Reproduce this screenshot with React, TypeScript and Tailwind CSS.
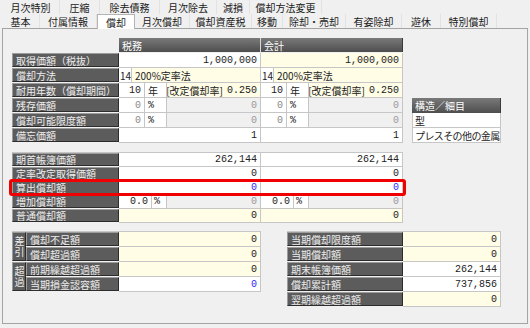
import React from "react";

const JP = "font-['Noto_Sans_CJK_JP','Noto_Sans',sans-serif]";
const MONO = "font-['Liberation_Mono','Noto_Sans_CJK_JP',monospace]";

function Label({ children, w = "w-[107px]", h = "h-[14px]" }: { children: React.ReactNode; w?: string; h?: string }) {
  return (
    <div
      className={`${w} ${h} shrink-0 bg-[#5c5c5c] border border-t-[#9c9c9c] border-l-[#9c9c9c] border-r-[#2c2c2c] border-b-[#2c2c2c] text-[#ededed] text-[10px] leading-[11px] pl-[3px] flex items-center whitespace-nowrap overflow-hidden`}
    >
      {children}
    </div>
  );
}

type CellProps = {
  w: string;
  bg?: string;
  right?: boolean;
  color?: string;
  mono?: boolean;
  pad?: string;
  children?: React.ReactNode;
};

function Cell({ w, bg = "bg-white", right, color = "text-[#222]", mono, pad, children }: CellProps) {
  return (
    <div
      className={`${w} h-full shrink-0 ${bg} ${color} border-r border-b border-[#c6c6c6] text-[10px] leading-[11px] flex items-center whitespace-nowrap overflow-hidden ${right ? "justify-end" : ""} ${pad ?? (right ? "pr-[3px]" : "pl-[3px]")} ${mono ? MONO : ""}`}
    >
      {children}
    </div>
  );
}

const YEL = "bg-[#fffde5]";
const GRY = "bg-[#f0f0f0]";

function Tab({ w, label, selected }: { w: string; label: string; selected?: boolean }) {
  return (
    <div
      className={`${w} shrink-0 flex items-center justify-center text-[10px] leading-[11px] text-[#1a1a1a] whitespace-nowrap ${
        selected ? "bg-white border-x border-t border-[#b4b4b4] h-[15px] relative z-10 -mb-px" : "h-[14px] border-r border-[#e2e2e2]"
      }`}
    >
      {label}
    </div>
  );
}

function Rate() {
  return (
    <span className="flex items-center">
      <span>[改定償却率]</span>
      <span className={`${MONO} ml-[4px]`}>0.250</span>
    </span>
  );
}

function VLabel({ text }: { text: string }) {
  return (
    <div className="h-[30px]">
      <div className="h-[29px] bg-[#5c5c5c] border border-t-[#9c9c9c] border-l-[#9c9c9c] border-r-[#2c2c2c] border-b-[#2c2c2c] text-[#ededed] text-[10px] leading-[12px] flex items-center justify-center">
        <span className="[writing-mode:vertical-rl] tracking-[1px]">{text}</span>
      </div>
    </div>
  );
}

export default function App() {
  return (
    <div className={`w-[530px] h-[328px] bg-[#f0f0f0] ${JP} overflow-hidden`}>
      {/* tabs */}
      <div className="pl-[2px] flex flex-col">
        <div className="flex h-[14px] items-end">
          <Tab w="w-[58px]" label="月次特別" />
          <Tab w="w-[40px]" label="圧縮" />
          <Tab w="w-[60px]" label="除去債務" />
          <Tab w="w-[57px]" label="月次除去" />
          <Tab w="w-[33px]" label="減損" />
          <Tab w="w-[72px]" label="償却方法変更" />
        </div>
        <div className="flex h-[14px] items-end">
          <Tab w="w-[38px]" label="基本" />
          <Tab w="w-[57px]" label="付属情報" />
          <Tab w="w-[38px]" label="償却" selected />
          <Tab w="w-[55px]" label="月次償却" />
          <Tab w="w-[62px]" label="償却資産税" />
          <Tab w="w-[31px]" label="移動" />
          <Tab w="w-[63px]" label="除却・売却" />
          <Tab w="w-[56px]" label="有姿除却" />
          <Tab w="w-[39px]" label="遊休" />
          <Tab w="w-[56px]" label="特別償却" />
        </div>
      </div>

      {/* panel */}
      <div className="mx-[2px] h-[296px] border border-[#a4a4a4] bg-[#f0f0f0] pl-[9px] pt-[9px] flex flex-col">
        {/* section 1 */}
        <div className="flex">
          <div className="flex flex-col w-[391px]">
            <div className="flex h-[15px]">
              <div className="w-[107px] shrink-0" />
              <div className="w-[142px] h-[14px] bg-gradient-to-b from-[#7a7a7a] to-[#4e4e4e] text-white text-[10px] leading-[11px] pl-[3px] flex items-center border-r border-[#d8d8d8]">税務</div>
              <div className="w-[142px] h-[14px] bg-gradient-to-b from-[#7a7a7a] to-[#4e4e4e] text-white text-[10px] leading-[11px] pl-[3px] flex items-center border-r border-[#3a3a3a]">会計</div>
            </div>
            <div className="flex h-[15px]">
              <Label>取得価額（税抜）</Label>
              <Cell w="w-[142px]" right mono>1,000,000</Cell>
              <Cell w="w-[142px]" bg={YEL} right mono>1,000,000</Cell>
            </div>
            <div className="flex h-[15px]">
              <Label>償却方法</Label>
              <Cell w="w-[13px]" pad="pl-[1px]">14</Cell>
              <Cell w="w-[129px]" bg={YEL}>200%定率法</Cell>
              <Cell w="w-[13px]" pad="pl-[1px]">14</Cell>
              <Cell w="w-[129px]" bg={YEL}>200%定率法</Cell>
            </div>
            <div className="flex h-[15px]">
              <Label>耐用年数（償却期間）</Label>
              <Cell w="w-[26px]" right mono>10</Cell>
              <Cell w="w-[22px]">年</Cell>
              <Cell w="w-[94px]" bg={YEL} right><Rate /></Cell>
              <Cell w="w-[26px]" right mono>10</Cell>
              <Cell w="w-[22px]">年</Cell>
              <Cell w="w-[94px]" bg={YEL} right><Rate /></Cell>
            </div>
            <div className="flex h-[15px]">
              <Label>残存価額</Label>
              <Cell w="w-[26px]" right mono color="text-[#8a8a8a]">0</Cell>
              <Cell w="w-[22px]" mono>%</Cell>
              <Cell w="w-[94px]" bg={GRY} right mono color="text-[#9a9a9a]">0</Cell>
              <Cell w="w-[26px]" right mono color="text-[#8a8a8a]">0</Cell>
              <Cell w="w-[22px]" mono>%</Cell>
              <Cell w="w-[94px]" bg={GRY} right mono color="text-[#9a9a9a]">0</Cell>
            </div>
            <div className="flex h-[15px]">
              <Label>償却可能限度額</Label>
              <Cell w="w-[26px]" right mono color="text-[#8a8a8a]">0</Cell>
              <Cell w="w-[22px]" mono>%</Cell>
              <Cell w="w-[94px]" bg={GRY} right mono color="text-[#9a9a9a]">0</Cell>
              <Cell w="w-[26px]" right mono color="text-[#8a8a8a]">0</Cell>
              <Cell w="w-[22px]" mono>%</Cell>
              <Cell w="w-[94px]" bg={GRY} right mono color="text-[#9a9a9a]">0</Cell>
            </div>
            <div className="flex h-[15px]">
              <Label>備忘価額</Label>
              <Cell w="w-[142px]" right mono>1</Cell>
              <Cell w="w-[142px]" right mono>1</Cell>
            </div>
          </div>

          {/* structure table */}
          <div className="ml-[9px] mt-[60px] w-[89px] flex flex-col">
            <div className="h-[15px] bg-gradient-to-b from-[#7a7a7a] to-[#4e4e4e] text-white text-[10px] leading-[11px] pl-[3px] flex items-center border-r border-[#3a3a3a]">構造／細目</div>
            <div className="h-[15px] bg-white border-x border-b border-[#c6c6c6] text-[10px] leading-[11px] pl-[2px] flex items-center text-[#222]">型</div>
            <div className="h-[15px] bg-white border-x border-b border-[#c6c6c6] text-[10px] leading-[11px] pl-[2px] tracking-[-0.6px] flex items-center text-[#222] whitespace-nowrap overflow-hidden">プレスその他の金属</div>
          </div>
        </div>

        {/* section 2 */}
        <div className="mt-[9px] flex flex-col w-[391px] border-t border-[#c6c6c6]">
          <div className="flex h-[14px]">
            <Label h="h-[13px]">期首帳簿価額</Label>
            <Cell w="w-[142px]" right mono>262,144</Cell>
            <Cell w="w-[142px]" right mono>262,144</Cell>
          </div>
          <div className="flex h-[14px]">
            <Label h="h-[13px]">定率改定取得価額</Label>
            <Cell w="w-[142px]" right mono>0</Cell>
            <Cell w="w-[142px]" right mono>0</Cell>
          </div>
          <div className="flex h-[14px] relative">
            <Label h="h-[13px]">算出償却額</Label>
            <Cell w="w-[142px]" right mono color="text-[#2b2bff]">0</Cell>
            <Cell w="w-[142px]" right mono color="text-[#2b2bff]">0</Cell>
            <div className="absolute left-[-3px] right-[-3px] top-[-2px] bottom-[-1px] border-[3px] border-[#f00000] rounded-[3px] pointer-events-none" />
          </div>
          <div className="flex h-[14px]">
            <Label h="h-[13px]">増加償却額</Label>
            <Cell w="w-[33px]" right mono>0.0</Cell>
            <Cell w="w-[15px]" mono pad="pl-[2px]">%</Cell>
            <Cell w="w-[94px]" bg={GRY} right mono color="text-[#9a9a9a]">0</Cell>
            <Cell w="w-[33px]" right mono>0.0</Cell>
            <Cell w="w-[15px]" mono pad="pl-[2px]">%</Cell>
            <Cell w="w-[94px]" bg={GRY} right mono color="text-[#9a9a9a]">0</Cell>
          </div>
          <div className="flex h-[14px]">
            <Label h="h-[13px]">普通償却額</Label>
            <Cell w="w-[142px]" bg={YEL} right mono>0</Cell>
            <Cell w="w-[142px]" bg={YEL} right mono>0</Cell>
          </div>
        </div>

        {/* section 3 */}
        <div className="mt-[8px] flex items-start">
          <div className="flex w-[249px] border-t border-[#c6c6c6]">
            <div className="flex flex-col w-[14px] shrink-0">
              <VLabel text="差引" />
              <VLabel text="超過" />
            </div>
            <div className="flex flex-col">
              <div className="flex h-[15px]">
                <Label w="w-[93px]">償却不足額</Label>
                <Cell w="w-[142px]" bg={YEL} right mono>0</Cell>
              </div>
              <div className="flex h-[15px]">
                <Label w="w-[93px]">償却超過額</Label>
                <Cell w="w-[142px]" bg={YEL} right mono>0</Cell>
              </div>
              <div className="flex h-[15px]">
                <Label w="w-[93px]">前期繰越超過額</Label>
                <Cell w="w-[142px]" bg={YEL} right mono>0</Cell>
              </div>
              <div className="flex h-[15px]">
                <Label w="w-[93px]">当期損金認容額</Label>
                <Cell w="w-[142px]" right mono color="text-[#2b2bff]">0</Cell>
              </div>
            </div>
          </div>

          <div className="ml-[26px] flex flex-col w-[214px] border-t border-[#c6c6c6]">
            <div className="flex h-[15px]">
              <Label w="w-[116px]">当期償却限度額</Label>
              <Cell w="w-[98px]" bg={YEL} right mono>0</Cell>
            </div>
            <div className="flex h-[15px]">
              <Label w="w-[116px]">当期償却額</Label>
              <Cell w="w-[98px]" bg={YEL} right mono>0</Cell>
            </div>
            <div className="flex h-[15px]">
              <Label w="w-[116px]">期末帳簿価額</Label>
              <Cell w="w-[98px]" right mono>262,144</Cell>
            </div>
            <div className="flex h-[15px]">
              <Label w="w-[116px]">償却累計額</Label>
              <Cell w="w-[98px]" right mono>737,856</Cell>
            </div>
            <div className="flex h-[15px]">
              <Label w="w-[116px]">翌期繰越超過額</Label>
              <Cell w="w-[98px]" bg={YEL} right mono>0</Cell>
            </div>
          </div>
        </div>
      </div>
    </div>
  );
}
